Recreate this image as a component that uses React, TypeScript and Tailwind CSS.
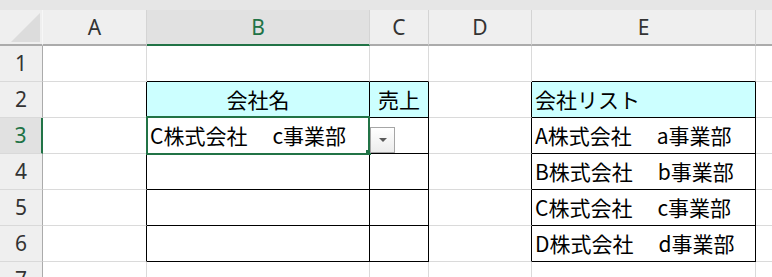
import React from 'react';

const COLS = ['A', 'B', 'C', 'D', 'E', 'F'];
const FONT = "font-['Noto_Sans_CJK_JP','Noto_Sans',sans-serif]";
const HEAD_FONT = "font-['Noto_Sans','Liberation_Sans',sans-serif]";

// cell contents keyed by "col+row"
const CELLS: Record<string, { text: string; align: 'left' | 'center'; fill?: boolean }> = {
    B2: { text: '会社名', align: 'center', fill: true },
    C2: { text: '売上', align: 'center', fill: true },
    E2: { text: '会社リスト', align: 'left', fill: true },
    B3: { text: 'C株式会社　c事業部', align: 'left' },
    E3: { text: 'A株式会社　a事業部', align: 'left' },
    E4: { text: 'B株式会社　b事業部', align: 'left' },
    E5: { text: 'C株式会社　c事業部', align: 'left' },
    E6: { text: 'D株式会社　d事業部', align: 'left' },
};

const framed = (row: number) => row >= 2 && row <= 6;

// the ideographic space renders a bit wider in the sheet font
const CellText: React.FC<{ text: string }> = ({ text }) => {
    const parts = text.split('　');
    return (
        <span className={`${FONT} text-[21px] leading-none text-black whitespace-nowrap`}>
            {parts.map((p, i) => (
                <React.Fragment key={i}>
                    {i > 0 && <span className="inline-block w-[25px]">　</span>}
                    {p}
                </React.Fragment>
            ))}
        </span>
    );
};

const Cell: React.FC<{ col: string; row: number }> = ({ col, row }) => {
    const cell = CELLS[col + row];
    const rightBlack = framed(row) && col !== 'F';
    const bottomBlack = row <= 6 && (col === 'B' || col === 'C' || col === 'E');

    return (
        <div
            className={`h-[36px] border-b border-r flex items-center ${
                rightBlack ? 'border-r-[#000000]' : 'border-r-[#dadada]'
            } ${bottomBlack ? 'border-b-[#000000]' : 'border-b-[#dadada]'} ${
                col === 'F' ? 'border-r-0' : ''
            } ${cell?.fill ? 'bg-[#ccffff]' : 'bg-white'} ${
                cell?.align === 'center' ? 'justify-center' : 'justify-start pl-[3px]'
            }`}
        >
            {cell && <CellText text={cell.text} />}
        </div>
    );
};

export default function App() {
    const rows = [1, 2, 3, 4, 5, 6, 7];

    return (
        <div className="relative w-[772px] h-[277px] overflow-hidden bg-white select-none">
            <div className="h-[10px] bg-[#e6e6e6]" />

            {/* column headers */}
            <div className="grid grid-cols-[43px_104px_223px_59px_103px_224px_1fr] h-[36px] bg-[#efefef]">
                <div className="relative border-b-2 border-b-[#ababab] border-r border-r-[#f7f7f7]">
                    <svg className="absolute left-[11px] top-[3px]" width="29" height="29" viewBox="0 0 29 29">
                        <path d="M29 0 L29 29 L0 29 Z" fill="#dcdcdc" />
                    </svg>
                </div>
                {COLS.map((c) => {
                    const active = c === 'B';
                    return (
                        <div
                            key={c}
                            className={`flex items-center justify-center border-b-2 ${
                                active ? 'border-b-[#217346] bg-[#e1e1e1] text-[#217346]' : 'border-b-[#ababab] text-[#333333]'
                            } ${c === 'F' ? '' : 'border-r border-r-[#d4d4d4]'} ${HEAD_FONT} text-[21px] leading-none`}
                        >
                            {c === 'F' ? '' : c}
                        </div>
                    );
                })}
            </div>

            {rows.map((r) => {
                const active = r === 3;
                return (
                    <div key={r} className="grid grid-cols-[43px_104px_223px_59px_103px_224px_1fr]">
                        <div
                            className={`h-[36px] flex items-center justify-center border-b border-b-[#d9d9d9] ${
                                active
                                    ? 'bg-[#e1e1e1] text-[#217346] border-r-2 border-r-[#217346]'
                                    : 'bg-[#efefef] text-[#333333] border-r border-r-[#ababab]'
                            } ${HEAD_FONT} text-[21px] leading-none`}
                        >
                            {r}
                        </div>
                        {COLS.map((c) => (
                            <Cell key={c} col={c} row={r} />
                        ))}
                    </div>
                );
            })}

            {/* active cell B3 with its fill handle */}
            <div className="absolute left-[146px] top-[116px] w-[224px] h-[39px] border-t-2 border-b-2 border-l-2 border-r-2 border-t-[#217346] border-b-[#217346] border-l-[#217346] border-r-[#217346]" />
            <div className="absolute left-[366px] top-[150px] w-[5px] h-[5px] bg-[#217346]" />

            {/* validation list button */}
            <div className="absolute left-[370px] top-[127px] w-[25px] h-[26px] border border-[#a6a6a6] bg-gradient-to-b from-white to-[#ececec] flex items-center justify-center">
                <svg width="8" height="4" viewBox="0 0 8 4">
                    <path d="M0 0 L8 0 L4 4 Z" fill="#595959" />
                </svg>
            </div>
        </div>
    );
}
